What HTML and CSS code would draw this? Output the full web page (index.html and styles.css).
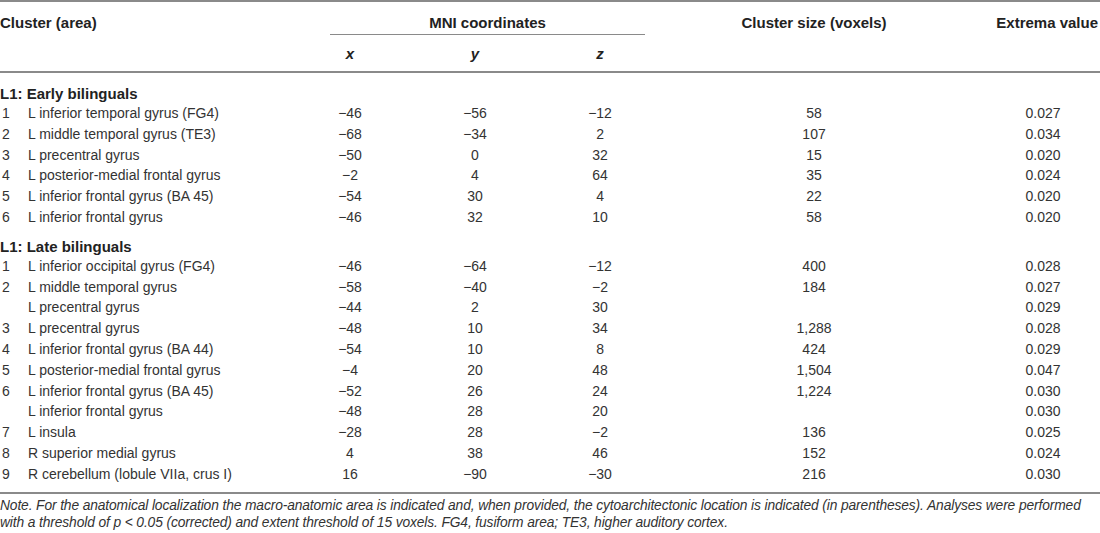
FILE: index.html
```html
<!DOCTYPE html>
<html lang="en">
<head>
<meta charset="utf-8">
<title>Clusters table</title>
<link rel="stylesheet" href="styles.css">
</head>
<body>
<div class="wrap">
<table class="tbl">
  <colgroup>
    <col class="c-num">
    <col class="c-name">
    <col class="c-x">
    <col class="c-y">
    <col class="c-z">
    <col class="c-size">
    <col class="c-ext">
  </colgroup>
  <thead>
    <tr class="h1">
      <th colspan="2" class="left">Cluster (area)</th>
      <th colspan="3" class="mni"><div class="mni-in">MNI coordinates</div></th>
      <th>Cluster size (voxels)</th>
      <th class="ext">Extrema value</th>
    </tr>
    <tr class="h2">
      <th colspan="2"></th>
      <th class="ax">x</th>
      <th class="ax">y</th>
      <th class="ax">z</th>
      <th></th>
      <th></th>
    </tr>
  </thead>
  <tbody>
    <tr class="sec first"><td colspan="7">L1: Early bilinguals</td></tr>
    <tr><td class="n">1</td><td class="nm">L inferior temporal gyrus (FG4)</td><td>−46</td><td>−56</td><td>−12</td><td>58</td><td class="ev">0.027</td></tr>
    <tr><td class="n">2</td><td class="nm">L middle temporal gyrus (TE3)</td><td>−68</td><td>−34</td><td>2</td><td>107</td><td class="ev">0.034</td></tr>
    <tr><td class="n">3</td><td class="nm">L precentral gyrus</td><td>−50</td><td>0</td><td>32</td><td>15</td><td class="ev">0.020</td></tr>
    <tr><td class="n">4</td><td class="nm">L posterior-medial frontal gyrus</td><td>−2</td><td>4</td><td>64</td><td>35</td><td class="ev">0.024</td></tr>
    <tr><td class="n">5</td><td class="nm">L inferior frontal gyrus (BA 45)</td><td>−54</td><td>30</td><td>4</td><td>22</td><td class="ev">0.020</td></tr>
    <tr><td class="n">6</td><td class="nm">L inferior frontal gyrus</td><td>−46</td><td>32</td><td>10</td><td>58</td><td class="ev">0.020</td></tr>
    <tr class="sec"><td colspan="7">L1: Late bilinguals</td></tr>
    <tr><td class="n">1</td><td class="nm">L inferior occipital gyrus (FG4)</td><td>−46</td><td>−64</td><td>−12</td><td>400</td><td class="ev">0.028</td></tr>
    <tr><td class="n">2</td><td class="nm">L middle temporal gyrus</td><td>−58</td><td>−40</td><td>−2</td><td>184</td><td class="ev">0.027</td></tr>
    <tr><td class="n"></td><td class="nm">L precentral gyrus</td><td>−44</td><td>2</td><td>30</td><td></td><td class="ev">0.029</td></tr>
    <tr><td class="n">3</td><td class="nm">L precentral gyrus</td><td>−48</td><td>10</td><td>34</td><td>1,288</td><td class="ev">0.028</td></tr>
    <tr><td class="n">4</td><td class="nm">L inferior frontal gyrus (BA 44)</td><td>−54</td><td>10</td><td>8</td><td>424</td><td class="ev">0.029</td></tr>
    <tr><td class="n">5</td><td class="nm">L posterior-medial frontal gyrus</td><td>−4</td><td>20</td><td>48</td><td>1,504</td><td class="ev">0.047</td></tr>
    <tr><td class="n">6</td><td class="nm">L inferior frontal gyrus (BA 45)</td><td>−52</td><td>26</td><td>24</td><td>1,224</td><td class="ev">0.030</td></tr>
    <tr><td class="n"></td><td class="nm">L inferior frontal gyrus</td><td>−48</td><td>28</td><td>20</td><td></td><td class="ev">0.030</td></tr>
    <tr><td class="n">7</td><td class="nm">L insula</td><td>−28</td><td>28</td><td>−2</td><td>136</td><td class="ev">0.025</td></tr>
    <tr><td class="n">8</td><td class="nm">R superior medial gyrus</td><td>4</td><td>38</td><td>46</td><td>152</td><td class="ev">0.024</td></tr>
    <tr class="last"><td class="n">9</td><td class="nm">R cerebellum (lobule VIIa, crus I)</td><td>16</td><td>−90</td><td>−30</td><td>216</td><td class="ev">0.030</td></tr>
  </tbody>
</table>
<p class="note">Note. For the anatomical localization the macro-anatomic area is indicated and, when provided, the cytoarchitectonic location is indicated (in parentheses). Analyses were performed with a threshold of p &lt; 0.05 (corrected) and extent threshold of 15 voxels. FG4, fusiform area; TE3, higher auditory cortex.</p>
</div>
</body>
</html>
```
FILE: styles.css
```css
html, body {
  margin: 0;
  padding: 0;
  background: #ffffff;
}

body {
  font-family: "Liberation Sans", Arial, Helvetica, sans-serif;
  color: #333333;
  font-size: 14px;
}

.wrap {
  width: 1100px;
}

.tbl {
  width: 1100px;
  border-collapse: collapse;
  table-layout: fixed;
  border-top: 2px solid #8a8a8a;
  border-bottom: 2px solid #8a8a8a;
}

.c-num { width: 28px; }
.c-name { width: 262px; }
.c-x { width: 120px; }
.c-y { width: 130px; }
.c-z { width: 120px; }
.c-size { width: 308px; }
.c-ext { width: 132px; }

th {
  font-weight: bold;
  font-size: 15px;
  color: #222222;
  text-align: center;
  padding: 0;
  line-height: 16px;
}

th.left {
  text-align: left;
}

.h1 th {
  padding-top: 13px;
  height: 18px;
  vertical-align: top;
}

.mni-in {
  margin-left: 40px;
  margin-right: 15px;
  border-bottom: 1px solid #8a8a8a;
  padding-bottom: 3px;
}

.h1 th.ext {
  text-align: right;
  padding-right: 2px;
}

.h2 th {
  height: 34px;
  padding: 0;
  vertical-align: middle;
  border-bottom: 2px solid #8a8a8a;
}

.h2 th.ax {
  font-style: italic;
  padding-top: 2px;
}

td {
  padding: 0;
  line-height: 20.8px;
  text-align: center;
  white-space: nowrap;
}

td.n {
  text-align: left;
  padding-left: 2px;
}

td.nm {
  text-align: left;
}

td.ev {
  padding-left: 18px;
}

tr.sec td {
  text-align: left;
  font-weight: bold;
  font-size: 15px;
  color: #222222;
  line-height: 18px;
  padding-top: 10px;
}

tr.sec.first td {
  padding-top: 12px;
}

tr.last td {
  padding-bottom: 7px;
}

.note {
  margin: 0;
  padding-top: 3px;
  font-style: italic;
  font-size: 13.8px;
  letter-spacing: -0.12px;
  line-height: 17px;
  color: #333333;
}
```
